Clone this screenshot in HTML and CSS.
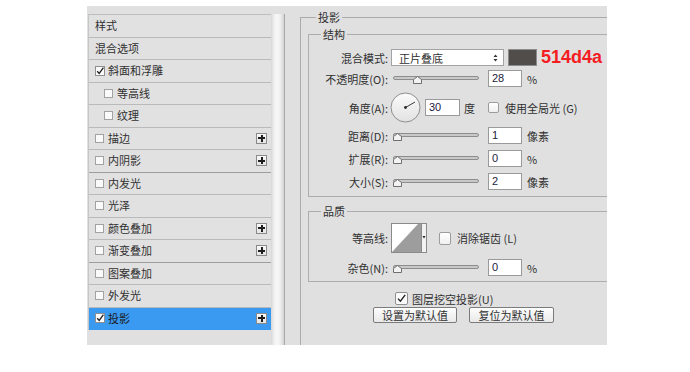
FILE: index.html
```html
<!DOCTYPE html>
<html lang="zh">
<head>
<meta charset="utf-8">
<title>图层样式 - 投影</title>
<link rel="stylesheet" href="styles.css">
</head>
<body>
<div class="dialog">
  <div class="side">
    <ul class="styles">
      <li class="row">样式</li>
      <li class="row">混合选项</li>
      <li class="row"><svg class="cb" viewBox="0 0 10 10"><rect x="0.5" y="0.5" width="9" height="9" fill="#fbfbfb" stroke="#8f8f8f"/><path d="M2.2 5.2 L4.2 7.4 L8.4 1.6" fill="none" stroke="#222" stroke-width="1.3"/></svg>斜面和浮雕</li>
      <li class="row sub"><span class="box"></span>等高线</li>
      <li class="row sub"><span class="box"></span>纹理</li>
      <li class="row"><span class="box"></span>描边<span class="plus"></span></li>
      <li class="row grp"><span class="box"></span>内阴影<span class="plus"></span></li>
      <li class="row"><span class="box"></span>内发光</li>
      <li class="row"><span class="box"></span>光泽</li>
      <li class="row"><span class="box"></span>颜色叠加<span class="plus"></span></li>
      <li class="row grp"><span class="box"></span>渐变叠加<span class="plus"></span></li>
      <li class="row"><span class="box"></span>图案叠加</li>
      <li class="row"><span class="box"></span>外发光</li>
      <li class="row sel"><svg class="cb" viewBox="0 0 10 10"><rect x="0.5" y="0.5" width="9" height="9" fill="#fbfbfb" stroke="#8f8f8f"/><path d="M2.2 5.2 L4.2 7.4 L8.4 1.6" fill="none" stroke="#222" stroke-width="1.3"/></svg>投影<span class="plus"></span></li>
    </ul>
    <div class="strip"></div>
  </div>

  <div class="main">
    <fieldset class="outer">
      <legend>投影</legend>

      <fieldset class="group struct">
        <legend>结构</legend>

        <div class="f-row r1">
          <span class="lbl">混合模式:</span>
          <span class="select">正片叠底
            <svg class="arr" viewBox="0 0 5 8"><path d="M0.5 3 L2.5 0.5 L4.5 3 Z M0.5 5 L2.5 7.5 L4.5 5 Z" fill="#333"/></svg>
          </span>
          <span class="swatch"></span>
          <span class="hex">514d4a</span>
        </div>

        <div class="f-row r2">
          <span class="lbl">不透明度(O):</span>
          <svg class="slider" viewBox="0 0 86 10"><rect x="0.5" y="2.5" width="85" height="3" rx="1.5" fill="#c9c9c9" stroke="#8d8d8d"/><path d="M20.5 9.5 V5.5 L24.5 2.5 L28.5 5.5 V9.5 Z" fill="#f3f3f3" stroke="#6f6f6f"/></svg>
          <span class="num">28</span>
          <span class="unit">%</span>
        </div>

        <div class="f-row r3">
          <span class="lbl">角度(A):</span>
          <svg class="dial" viewBox="0 0 31 31">
            <defs><linearGradient id="dg" x1="0" y1="0" x2="0" y2="1"><stop offset="0" stop-color="#fbfbfb"/><stop offset="1" stop-color="#e2e2e2"/></linearGradient></defs>
            <circle cx="15.5" cy="15.5" r="14.5" fill="url(#dg)" stroke="#8e8e8e"/>
            <line x1="15.5" y1="15.5" x2="25" y2="10" stroke="#3c3c3c" stroke-width="1"/>
            <circle cx="15.5" cy="15.5" r="1.4" fill="#2a2a2a"/>
          </svg>
          <span class="num wide">30</span>
          <span class="unit deg">度</span>
          <span class="chk"></span>
          <span class="chk-text">使用全局光 (G)</span>
        </div>

        <div class="f-row r4">
          <span class="lbl">距离(D):</span>
          <svg class="slider" viewBox="0 0 86 10"><rect x="0.5" y="2.5" width="85" height="3" rx="1.5" fill="#c9c9c9" stroke="#8d8d8d"/><path d="M0.5 9.5 V5.5 L4.5 2.5 L8.5 5.5 V9.5 Z" fill="#f3f3f3" stroke="#6f6f6f"/></svg>
          <span class="num">1</span>
          <span class="unit">像素</span>
        </div>

        <div class="f-row r5">
          <span class="lbl">扩展(R):</span>
          <svg class="slider" viewBox="0 0 86 10"><rect x="0.5" y="2.5" width="85" height="3" rx="1.5" fill="#c9c9c9" stroke="#8d8d8d"/><path d="M0.5 9.5 V5.5 L4.5 2.5 L8.5 5.5 V9.5 Z" fill="#f3f3f3" stroke="#6f6f6f"/></svg>
          <span class="num">0</span>
          <span class="unit">%</span>
        </div>

        <div class="f-row r6">
          <span class="lbl">大小(S):</span>
          <svg class="slider" viewBox="0 0 86 10"><rect x="0.5" y="2.5" width="85" height="3" rx="1.5" fill="#c9c9c9" stroke="#8d8d8d"/><path d="M0.5 9.5 V5.5 L4.5 2.5 L8.5 5.5 V9.5 Z" fill="#f3f3f3" stroke="#6f6f6f"/></svg>
          <span class="num">2</span>
          <span class="unit">像素</span>
        </div>
      </fieldset>

      <fieldset class="group quality">
        <legend>品质</legend>

        <div class="f-row q1">
          <span class="lbl">等高线:</span>
          <svg class="contour" viewBox="0 0 36 30">
            <rect x="0.5" y="0.5" width="30" height="29" fill="#ffffff" stroke="#8a8a8a"/>
            <path d="M1 29 L27 1 L30 1 L30 29 Z" fill="#9d9d9d"/>
            <rect x="30.5" y="0.5" width="5" height="29" fill="#f2f2f2" stroke="#8a8a8a"/>
            <path d="M31.5 13 L34.5 13 L33 15.5 Z" fill="#222"/>
          </svg>
          <span class="chk big"></span>
          <span class="chk-text">消除锯齿 (L)</span>
        </div>

        <div class="f-row q2">
          <span class="lbl">杂色(N):</span>
          <svg class="slider" viewBox="0 0 86 10"><rect x="0.5" y="2.5" width="85" height="3" rx="1.5" fill="#c9c9c9" stroke="#8d8d8d"/><path d="M0.5 9.5 V5.5 L4.5 2.5 L8.5 5.5 V9.5 Z" fill="#f3f3f3" stroke="#6f6f6f"/></svg>
          <span class="num">0</span>
          <span class="unit">%</span>
        </div>
      </fieldset>

      <div class="knock">
        <svg class="kcb" viewBox="0 0 13 13"><rect x="0.5" y="0.5" width="12" height="12" rx="1.5" fill="#fbfbfb" stroke="#8f8f8f"/><path d="M3 6.6 L5.4 9.2 L10.2 2.8" fill="none" stroke="#222" stroke-width="1.4"/></svg>
        <span class="chk-text">图层挖空投影(U)</span>
      </div>

      <div class="buttons">
        <button class="btn b1" type="button">设置为默认值</button>
        <button class="btn b2" type="button">复位为默认值</button>
      </div>
    </fieldset>
  </div>
</div>
</body>
</html>
```

FILE: styles.css
```css
* { box-sizing: border-box; }

body {
  margin: 0;
  background: #ffffff;
  font-family: "Noto Sans CJK SC", "Noto Sans", sans-serif;
  font-size: 11px;
  color: #303030;
}

.dialog {
  margin: 6px 0 0 87px;
  width: 520px;
  height: 339px;
  background: #e0e0e0;
  display: flex;
  overflow: hidden;
}

/* ---------- left list ---------- */
.side {
  flex: none;
  width: 199px;
  display: flex;
  padding: 8px 0 0 1px;
}

.styles {
  list-style: none;
  margin: 0;
  padding: 0;
  width: 183px;
  align-self: flex-start;
  border-top: 1px solid #bdbdbd;
  border-left: 1px solid #c6c6c6;
}

.row {
  height: 22.5px;
  display: flex;
  align-items: center;
  padding-left: 6px;
  background: #e1e1e1;
  border-bottom: 1px solid #bababa;
  line-height: 1;
}

.row.sub { padding-left: 15px; }
.row.grp { border-bottom-color: #9e9e9e; }
.row.sel { background: #3a9af2; border-bottom-color: #3a9af2; color: #1a1a1a; }

.box {
  flex: none;
  width: 9px;
  height: 9px;
  margin-right: 4px;
  border: 1px solid #a2a2a2;
  background: #fafafa;
}

.cb {
  flex: none;
  width: 10px;
  height: 10px;
  margin-right: 3px;
}

.plus {
  flex: none;
  margin-left: auto;
  margin-right: 4px;
  width: 11px;
  height: 11px;
  border: 1px solid #8a8a8a;
  background:
    linear-gradient(#1e1e1e, #1e1e1e) center / 7px 2px no-repeat,
    linear-gradient(#1e1e1e, #1e1e1e) center / 2px 7px no-repeat,
    linear-gradient(#fafafa, #e4e4e4);
}

.strip {
  width: 14px;
  flex: none;
  border-right: 1px solid #a9a9a9;
  background: linear-gradient(to right, #d6d6d6 0%, #f1f1f1 25%, #f7f7f7 50%, #ececec 75%, #d2d2d2 100%);
}

/* ---------- right panel ---------- */
.main {
  flex: none;
  width: 307px;
  margin-left: 14px;
  padding-top: 4px;
  display: flex;
  flex-direction: column;
}

fieldset {
  margin: 0;
  min-width: 0;
}

legend {
  font-size: 11px;
  line-height: 14px;
  padding: 0 2px;
}

.outer {
  flex: 1;
  padding: 0 0 0 7px;
  border: 0;
  border-top: 1px solid #ababab;
  border-left: 1px solid #ababab;
}

.outer > legend { margin-left: 8px; }

.group {
  width: 320px;
  padding: 0;
  border: 1px solid #adadad;
  border-right: 0;
}

.group > legend { margin-left: 12px; }

.struct {
  margin-top: 3px;
  padding-top: 8px;
  padding-bottom: 6px;
}

.quality {
  margin-top: 7px;
  padding-top: 5px;
  padding-bottom: 5px;
}

.f-row {
  display: flex;
  align-items: center;
  height: 17px;
}

.r2 { margin-top: 4px; }
.r3 { margin-top: 5px; height: 31px; }
.r4 { margin-top: 4px; }
.r5 { margin-top: 6px; }
.r6 { margin-top: 6px; }
.q1 { height: 30px; }
.q2 { margin-top: 6px; }

.lbl {
  flex: none;
  width: 79px;
  text-align: right;
  white-space: nowrap;
}

.select {
  flex: none;
  margin-left: 3px;
  width: 113px;
  height: 17px;
  border: 1px solid #a3a3a3;
  background: #ffffff;
  display: flex;
  align-items: center;
  padding-left: 7px;
}

.arr {
  width: 5px;
  height: 8px;
  margin-left: auto;
  margin-right: 5px;
}

.swatch {
  flex: none;
  margin-left: 4px;
  width: 29px;
  height: 17px;
  background: #514d4a;
  border: 1px solid #8c8c8c;
}

.hex {
  margin-left: 4px;
  font-family: "Liberation Sans", Arial, sans-serif;
  font-weight: bold;
  font-size: 18px;
  color: #f41d22;
  line-height: 17px;
}

.slider {
  flex: none;
  width: 86px;
  height: 10px;
  margin-left: 5px;
}

.num {
  flex: none;
  margin-left: 9px;
  width: 34px;
  height: 17px;
  background: #ffffff;
  border: 1px solid #9a9a9a;
  font-family: "Liberation Sans", Arial, sans-serif;
  font-size: 11px;
  color: #1b1b40;
  line-height: 15px;
  padding-left: 3px;
}

.num.wide { margin-left: 4px; width: 35px; }

.unit { margin-left: 5px; }
.unit.deg { margin-left: 4px; }

.dial {
  flex: none;
  width: 31px;
  height: 31px;
  margin-left: 2px;
}

.chk {
  flex: none;
  width: 11px;
  height: 11px;
  margin-left: 13px;
  border: 1px solid #9c9c9c;
  border-radius: 2px;
  background: linear-gradient(#ffffff, #f0f0f0);
}

.chk.big { width: 12px; height: 13px; margin-left: 12px; }

.chk-text { margin-left: 6px; white-space: nowrap; }

.contour {
  flex: none;
  width: 36px;
  height: 30px;
  margin-left: 3px;
}

.knock {
  display: flex;
  align-items: center;
  height: 13px;
  margin-top: 10px;
  padding-left: 87px;
}

.kcb { width: 13px; height: 13px; flex: none; }
.knock .chk-text { margin-left: 4px; }

.buttons {
  display: flex;
  margin-top: 2px;
  padding-left: 65px;
}

.btn {
  height: 16px;
  padding: 0;
  font-family: "Noto Sans CJK SC", "Noto Sans", sans-serif;
  font-size: 11px;
  line-height: 14px;
  color: #303030;
  border: 1px solid #7b7b7b;
  border-radius: 2px;
  background: linear-gradient(#fdfdfd, #e9e9e9);
}

.b1 { width: 84px; }
.b2 { width: 85px; margin-left: 12px; }
```
